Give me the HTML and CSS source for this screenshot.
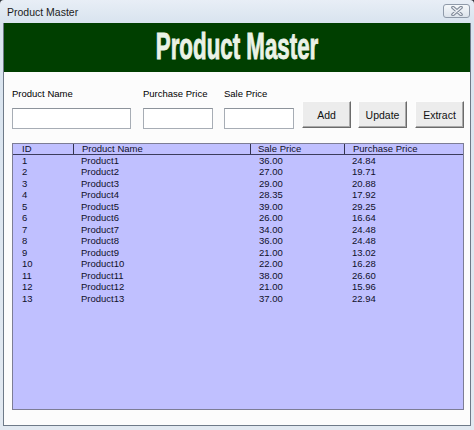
FILE: index.html
```html
<!DOCTYPE html>
<html>
<head>
<meta charset="utf-8">
<title>Product Master</title>
<link rel="stylesheet" href="styles.css">
</head>
<body>
<div class="window">
  <div class="titlebar">
    <span class="title">Product Master</span>
    <span class="close">
      <svg width="14" height="10" viewBox="0 0 14 10">
        <path d="M3 1.5 L11 8.5 M11 1.5 L3 8.5" stroke="#7d8796" stroke-width="3.6" stroke-linecap="round" fill="none"/>
        <path d="M3 1.5 L11 8.5 M11 1.5 L3 8.5" stroke="#eef1f5" stroke-width="1.4" stroke-linecap="round" fill="none"/>
      </svg>
    </span>
  </div>
  <div class="client">
    <div class="banner"><h1 class="banner-title">Product Master</h1></div>
    <div class="form">
      <div class="field f-name"><label>Product Name</label><input class="input" type="text"></div>
      <div class="field f-purchase"><label>Purchase Price</label><input class="input" type="text"></div>
      <div class="field f-sale"><label>Sale Price</label><input class="input" type="text"></div>
      <button class="btn btn-add">Add</button>
      <button class="btn btn-update">Update</button>
      <button class="btn btn-extract">Extract</button>
    </div>
    <div class="list">
      <div class="row head"><span>ID</span><span>Product Name</span><span>Sale Price</span><span>Purchase Price</span></div>
      <div class="row"><span>1</span><span>Product1</span><span>36.00</span><span>24.84</span></div>
      <div class="row"><span>2</span><span>Product2</span><span>27.00</span><span>19.71</span></div>
      <div class="row"><span>3</span><span>Product3</span><span>29.00</span><span>20.88</span></div>
      <div class="row"><span>4</span><span>Product4</span><span>28.35</span><span>17.92</span></div>
      <div class="row"><span>5</span><span>Product5</span><span>39.00</span><span>29.25</span></div>
      <div class="row"><span>6</span><span>Product6</span><span>26.00</span><span>16.64</span></div>
      <div class="row"><span>7</span><span>Product7</span><span>34.00</span><span>24.48</span></div>
      <div class="row"><span>8</span><span>Product8</span><span>36.00</span><span>24.48</span></div>
      <div class="row"><span>9</span><span>Product9</span><span>21.00</span><span>13.02</span></div>
      <div class="row"><span>10</span><span>Product10</span><span>22.00</span><span>16.28</span></div>
      <div class="row"><span>11</span><span>Product11</span><span>38.00</span><span>26.60</span></div>
      <div class="row"><span>12</span><span>Product12</span><span>21.00</span><span>15.96</span></div>
      <div class="row"><span>13</span><span>Product13</span><span>37.00</span><span>22.94</span></div>
    </div>
  </div>
</div>
</body>
</html>
```

FILE: styles.css
```css
* { box-sizing: border-box; }
html, body { margin: 0; padding: 0; }
body {
  width: 474px;
  height: 430px;
  overflow: hidden;
  background: #2f343b;
  font-family: "Liberation Sans", Arial, sans-serif;
}
.window {
  width: 474px;
  height: 430px;
  border-radius: 4px 4px 0 0;
  background: linear-gradient(#e8eef6, #d9e4ef 22px, #e2e9f1);
  display: flex;
  flex-direction: column;
}
.titlebar {
  height: 23px;
  display: flex;
  align-items: center;
  padding: 0 4px 0 7px;
}
.title {
  font-size: 10.5px;
  color: #1c1c1c;
}
.close {
  margin-left: auto;
  margin-top: -1px;
  width: 27px;
  height: 14px;
  border: 1px solid #8f9aa9;
  border-radius: 3px;
  background: linear-gradient(#f5f8fb, #dce3eb);
  display: flex;
  align-items: center;
  justify-content: center;
}
.client {
  margin: 0 3px;
  height: 403px;
  background: #fcfcfc;
  border: 1px solid #6e7a88;
  border-top: none;
}
.banner {
  height: 49px;
  background: #003f00;
  display: flex;
  justify-content: center;
}
.banner-title {
  margin: 0;
  font-size: 36px;
  font-weight: bold;
  line-height: 47px;
  color: #eaf2e6;
  white-space: nowrap;
  transform: scaleX(0.62);
  -webkit-text-stroke: 0.9px #eaf2e6;
}
.form {
  display: flex;
  align-items: flex-end;
  padding: 16px 0 0 8px;
}
.field {
  display: flex;
  flex-direction: column;
}
.field label {
  font-size: 9.5px;
  line-height: 12px;
  height: 12px;
  margin-bottom: 8px;
  color: #000;
  white-space: nowrap;
}
.input {
  width: 100%;
  height: 21px;
  margin: 0;
  padding: 0 2px;
  background: #fff;
  border: 1px solid #a7adb5;
  border-top-color: #8d939b;
  font: inherit;
}
.f-name { width: 119px; }
.f-purchase { width: 70px; margin-left: 12px; }
.f-sale { width: 70px; margin-left: 11px; }
.btn {
  width: 49px;
  height: 27px;
  margin-bottom: 1px;
  padding: 0;
  font-family: "Liberation Sans", Arial, sans-serif;
  font-size: 10.5px;
  color: #111;
  background: #ececec;
  border: 1px solid;
  border-color: #fdfdfd #6b6b6b #6b6b6b #fdfdfd;
  box-shadow: inset -1px -1px 0 #a9a9a9;
}
.btn-add { margin-left: 8px; }
.btn-update { margin-left: 7px; }
.btn-extract { margin-left: 8px; }
.list {
  margin: 14px 0 0 8px;
  width: 452px;
  height: 267px;
  background: #c0c0ff;
  border: 1px solid #7d7d95;
  font-size: 9.5px;
  color: #10102a;
}
.row {
  display: grid;
  grid-template-columns: 60px 177px 94px 1fr;
  line-height: 11.47px;
}
.row span {
  white-space: nowrap;
  padding-left: 9px;
}
.row span:nth-child(2),
.row span:nth-child(4) { padding-left: 8px; }
.head {
  line-height: 10px;
  border-bottom: 1px solid #3c3c5c;
}
.head span + span {
  border-left: 1px solid #33334f;
  padding-left: 7px;
}
```
